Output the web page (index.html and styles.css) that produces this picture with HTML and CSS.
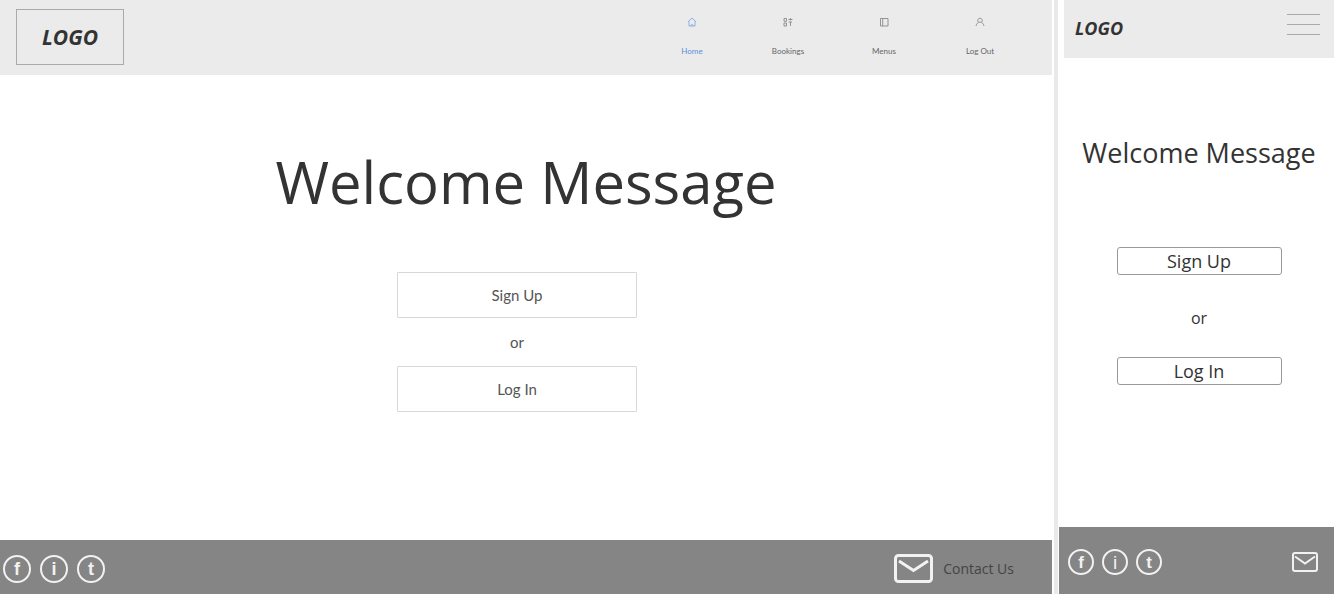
FILE: index.html
```html
<!DOCTYPE html>
<html lang="en">
<head>
<meta charset="utf-8">
<meta name="viewport" content="width=device-width, initial-scale=1">
<title>Welcome</title>
<link rel="stylesheet" href="styles.css">
</head>
<body>
<div class="board">
  <section class="pane desktop" aria-label="Desktop">
    <header class="bar">
      <a class="logo boxed" href="#">LOGO</a>
      <nav class="nav">
        <a class="nav-link active" href="#">
          <svg viewBox="0 0 10 10"><path d="M1 4.8 5 1l4 3.8M2 4.5V9h1.8M8 4.5V9H6.2M3.8 9c0-2 2.4-2 2.4 0z"/></svg>
          <span>Home</span>
        </a>
        <a class="nav-link" href="#">
          <svg viewBox="0 0 10 10"><path d="M1 1.5h2.500v2.800H1zM1 6h2.500v3H1zM5.500 2.500h4M5.500 5h3.500M7.500 1v2.500M7.500 5V9"/></svg>
          <span>Bookings</span>
        </a>
        <a class="nav-link" href="#">
          <svg viewBox="0 0 10 10"><path d="M1.5 1.5h7.5v7.5H1.5zM3.7 1.5V9"/></svg>
          <span>Menus</span>
        </a>
        <a class="nav-link" href="#">
          <svg viewBox="0 0 10 10"><path d="M3.200 5C2.200 3.500 3 1.200 5 1.200S7.800 3.500 6.800 5M1 9c.5-2.200 1.500-3.500 4-4 2.500.5 3.500 1.800 4 4"/></svg>
          <span>Log Out</span>
        </a>
      </nav>
    </header>
    <main class="content">
      <h1 class="title">Welcome Message</h1>
      <div class="actions">
        <button class="btn" type="button">Sign Up</button>
        <span class="or">or</span>
        <button class="btn" type="button">Log In</button>
      </div>
    </main>
    <footer class="foot">
      <div class="social">
        <a class="disc" href="#">f</a>
        <a class="disc" href="#">i</a>
        <a class="disc" href="#">t</a>
      </div>
      <a class="contact" href="#">
        <svg class="mail" viewBox="0 0 39 29"><rect x="1.500" y="1.500" width="36" height="26" rx="3"/><path d="M5 7l14.500 9.500L34 7"/></svg>
        <span>Contact Us</span>
      </a>
    </footer>
  </section>
  <div class="divider"></div>
  <section class="pane mobile" aria-label="Mobile">
    <header class="bar">
      <a class="logo" href="#">LOGO</a>
      <button class="burger" type="button" aria-label="Menu"><i></i><i></i><i></i></button>
    </header>
    <main class="content">
      <h1 class="title">Welcome Message</h1>
      <div class="actions">
        <button class="btn" type="button">Sign Up</button>
        <span class="or">or</span>
        <button class="btn" type="button">Log In</button>
      </div>
    </main>
    <footer class="foot">
      <div class="social">
        <a class="disc" href="#">f</a>
        <a class="disc light" href="#">i</a>
        <a class="disc" href="#">t</a>
      </div>
      <a class="contact" href="#" aria-label="Contact Us">
        <svg class="mail" viewBox="0 0 26 20"><rect x="1" y="1" width="24" height="18" rx="2"/><path d="M3 4.500l10 7 10-7"/></svg>
      </a>
    </footer>
  </section>
</div>
</body>
</html>
```
FILE: styles.css
```css
* { box-sizing: border-box; }

body {
  margin: 0;
  background: #fff;
  color: #333;
  font-family: "Segoe UI", "Open Sans", "Noto Sans", sans-serif;
}

a { color: inherit; text-decoration: none; }

svg { display: block; fill: none; stroke: currentColor; }

.board { display: flex; min-height: 100vh; }

.pane { display: flex; flex-direction: column; }
.desktop { flex: 1052; }
.mobile { flex: 275; }

.divider {
  width: 7px;
  background: #e9e9e9;
  border: solid #fff;
  border-width: 0 1px 0 2px;
}

.bar {
  display: flex;
  align-items: center;
  justify-content: space-between;
  background: #ebebeb;
}

.logo { font-weight: 700; font-style: italic; }

.content {
  flex: 1;
  display: flex;
  flex-direction: column;
  align-items: center;
}

.title { margin: 0; font-weight: 400; white-space: nowrap; }

.actions { display: flex; flex-direction: column; align-items: center; }

.btn {
  padding: 0;
  background: #fff;
  color: inherit;
  font-family: inherit;
}

.foot {
  display: flex;
  align-items: center;
  justify-content: space-between;
  background: #858585;
}

.social { display: flex; }

.disc {
  display: grid;
  place-items: center;
  border: 2px solid #f2f2f2;
  border-radius: 50%;
  color: #f2f2f2;
  font-family: "Liberation Sans", Arial, sans-serif;
  line-height: 1;
}

.contact { display: flex; align-items: center; }
.mail { color: #f2f2f2; }

/* Desktop */
.desktop .bar { height: 75px; padding: 0 24px 2px 16px; }

.boxed {
  width: 108px;
  padding: 14px 0;
  border: 1px solid #aaa;
  text-align: center;
}
.desktop .logo { font-size: 21px; line-height: 26px; }

.nav { display: flex; }
.nav-link {
  display: flex;
  flex-direction: column;
  align-items: center;
  gap: 18px;
  width: 96px;
  color: #666;
  font-family: Lato, sans-serif;
  font-size: 8px;
  line-height: 12px;
}
.nav-link svg { width: 10px; height: 10px; stroke-width: 0.8; opacity: 0.8; }
.nav-link.active { color: #5b8fe0; }

.desktop .content { padding-top: 67px; }
.desktop .title { font-size: 58px; line-height: 80px; }
.desktop .actions { padding: 50px 18px 0 0; }
.desktop .btn {
  width: 240px;
  height: 46px;
  border: 1px solid #d8d8d8;
  border-radius: 1px;
  color: #555;
  font-family: Lato, sans-serif;
  font-size: 15px;
}
.desktop .or {
  color: #555;
  font-family: Lato, sans-serif;
  font-size: 15px;
  line-height: 48px;
}

.desktop .foot { height: 54px; padding: 3px 38px 0 3px; }
.desktop .social { gap: 9px; }
.desktop .disc { width: 28px; height: 28px; font-size: 18px; font-weight: 700; }
.desktop .contact { gap: 10px; color: #444; font-size: 14px; }
.desktop .mail { width: 39px; height: 29px; stroke-width: 3; }

/* Mobile */
.mobile .bar { height: 58px; margin-left: 5px; padding: 0 14px 0 11px; }
.mobile .logo { padding-bottom: 2px; font-size: 18px; }

.burger {
  display: grid;
  gap: 9px;
  width: 33px;
  padding: 0 0 9px;
  border: 0;
  background: none;
}
.burger i { height: 1px; background: #aaa; }

.mobile .content { padding: 76px 0 0 5px; }
.mobile .title { font-size: 27px; line-height: 38px; }
.mobile .actions { padding-top: 75px; }
.mobile .btn {
  width: 165px;
  height: 28px;
  border: 1px solid #999;
  border-radius: 3px;
  font-size: 18px;
  line-height: 26px;
}
.mobile .or { padding: 31px 0 27px; font-size: 16px; line-height: 24px; }

.mobile .foot { height: 67px; padding: 3px 16px 0 9px; }
.mobile .social { gap: 8px; }
.mobile .disc { width: 26px; height: 26px; font-size: 17px; font-weight: 700; }
.mobile .disc.light { font-size: 19px; font-weight: 400; }
.mobile .mail { width: 26px; height: 20px; stroke-width: 2; }
```
